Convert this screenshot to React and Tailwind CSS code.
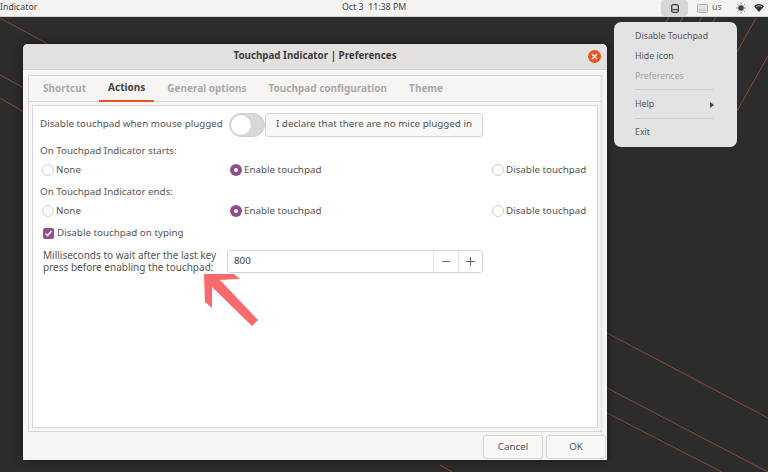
import React from 'react';

const font = { fontFamily: '"Noto Sans", sans-serif' };

const Radio = ({ checked, label }) => (
  <div className="flex items-center gap-[2px]">
    {checked ? (
      <span className="w-[12px] h-[12px] rounded-full bg-[#924d8b] flex items-center justify-center">
        <span className="w-[4px] h-[4px] rounded-full bg-white" />
      </span>
    ) : (
      <span className="w-[12px] h-[12px] rounded-full border border-[#cfcfcf] bg-white" />
    )}
    <span>{label}</span>
  </div>
);

const RadioRow = () => (
  <div className="h-[20px] pl-[9px] grid grid-cols-[188px_262px_auto] items-center">
    <Radio label="None" />
    <Radio checked label="Enable touchpad" />
    <Radio label="Disable touchpad" />
  </div>
);

const Wallpaper = () => (
  <svg className="absolute inset-0" width="768" height="472" viewBox="0 0 768 472" fill="none" stroke="#8a4a36" strokeWidth="1">
    <path d="M0 18L48 44" />
    <path d="M0 75L24 88" />
    <path d="M0 98L24 112" />
    <path d="M607 333L768 418" />
    <path d="M607 388L768 472" />
    <path d="M607 413L722 472" />
    <path d="M440 465L452 472" />
    <path d="M756 18L737 52" />
    <path d="M768 56L737 111" />
    <path d="M669 17L666 22" />
    <path d="M683 17L680 22" />
    <path d="M702 17L699 22" />
    <path d="M716 17L713 22" />
  </svg>
);

const App = () => {
  const tabs = ['Shortcut', 'Actions', 'General options', 'Touchpad configuration', 'Theme'];

  return (
    <div className="relative w-[768px] h-[472px] overflow-hidden bg-[#2d2c2c] text-[#555555]" style={font}>
      <Wallpaper />

      {/* Top bar */}
      <header className="absolute top-0 left-0 w-full h-[17px] bg-[#f4f3f2] flex items-center justify-between border-b border-[#d5d4d3] text-[8.8px] text-[#444444]">
        <span>Indicator</span>
        <span className="absolute left-[342px]">Oct 3&nbsp; 11:38 PM</span>
        <div className="flex items-center h-full">
          <div className="w-[27px] h-[16px] bg-[#d9d8d7] rounded-[3px] flex items-center justify-center">
            <svg width="8" height="9" viewBox="0 0 8 9">
              <rect x="0.7" y="0.7" width="6.6" height="7.6" rx="1.5" fill="none" stroke="#3f3f3f" strokeWidth="1.3" />
              <rect x="1" y="5" width="6" height="1.2" fill="#3f3f3f" />
            </svg>
          </div>
          <svg className="ml-[9px]" width="11" height="9" viewBox="0 0 11 9">
            <rect x="0.5" y="0.5" width="10" height="8" rx="1" fill="#e2e2e2" stroke="#b0b0b0" />
            <rect x="2" y="5.5" width="7" height="1" fill="#bcbcbc" />
          </svg>
          <span className="ml-[4px] w-[24px] text-[#666666]">us</span>
          <svg width="10" height="12" viewBox="0 0 10 12" stroke="#6a6a6a" strokeWidth="0.8">
            <circle cx="5" cy="6" r="2.8" fill="#444444" stroke="none" />
            <path d="M5 0.5V2.5M5 9.5V11.5M0 6H1.8M8.2 6H10M1.2 2.2L2.6 3.6M7.4 8.4L8.8 9.8M8.8 2.2L7.4 3.6M2.6 8.4L1.2 9.8" />
          </svg>
          <svg className="ml-[8px] mr-[4px]" width="10" height="8" viewBox="0 0 10 8">
            <path d="M0 2.2C2.8 -0.6 7.2 -0.6 10 2.2L5 8Z" fill="#333333" />
            <path d="M2 2.8C3.8 1.5 6.2 1.5 8 2.8" fill="none" stroke="#f4f3f2" strokeWidth="0.7" />
          </svg>
        </div>
      </header>

      {/* Preferences window */}
      <section className="absolute left-[23px] top-[44px] w-[584px] h-[416px] bg-[#f6f5f4] rounded-t-[5px] flex flex-col shadow-[0_0_8px_rgba(0,0,0,0.5)]">
        <div className="relative h-[26px] shrink-0 bg-[#e2e1e0] rounded-t-[5px] border-b border-[#d2d1d0] flex items-center justify-center font-bold text-[9.8px] text-[#3d3d3d]">
          Touchpad Indicator | Preferences
          <span className="absolute right-[6px] top-[6px] w-[13px] h-[13px] rounded-full bg-[#e95420] flex items-center justify-center">
            <svg width="7" height="7" viewBox="0 0 7 7" stroke="#ffffff" strokeWidth="1.4">
              <path d="M1 1L6 6M6 1L1 6" />
            </svg>
          </span>
        </div>

        <div className="mt-[5px] mx-[5px] h-[357px] border border-[#d8d7d6] flex flex-col">
          <nav className="h-[26px] shrink-0 flex pl-[3px] border-b border-[#d8d7d6] font-bold text-[10px] text-[#a9a9a9]">
            {tabs.map((tab) => (
              <div
                key={tab}
                className={
                  tab === 'Actions'
                    ? 'px-[9px] mx-[2px] pb-[1px] h-[26px] flex items-center text-[#444444] border-b-2 border-[#e95420]'
                    : 'px-[11px] pb-[2px] h-[26px] flex items-center'
                }
              >
                {tab}
              </div>
            ))}
          </nav>

          <div className="flex-1 m-[3px] bg-white border border-[#d8d7d6] flex flex-col text-[9.8px]">
            <div className="mt-[6px] h-[25px] pl-[7px] flex items-center">
              <span className="w-[189px] whitespace-nowrap">Disable touchpad when mouse plugged</span>
              <div className="w-[36px] h-[24px] rounded-full bg-[#d9d8d7] border border-[#d0cfce]">
                <div className="w-[22px] h-[22px] rounded-full bg-white border border-[#d0cfce]" />
              </div>
              <button className="w-[218px] h-[24px] bg-[#f8f8f7] border border-[#d5d4d3] rounded-[3px] text-[#555555]">
                I declare that there are no mice plugged in
              </button>
            </div>
            <div className="mt-[2px] h-[21px] pl-[7px] pt-[3px] flex items-center">On Touchpad Indicator starts:</div>
            <RadioRow />
            <div className="mt-[1px] h-[20px] pl-[7px] pt-[2px] flex items-center">On Touchpad Indicator ends:</div>
            <RadioRow />
            <div className="mt-[2px] h-[20px] pl-[10px] flex items-center gap-[3px]">
              <span className="w-[11px] h-[11px] rounded-[2px] bg-[#924d8b] flex items-center justify-center">
                <svg width="9" height="9" viewBox="0 0 9 9" fill="none" stroke="#ffffff" strokeWidth="1.4">
                  <path d="M1.5 4.5L3.7 6.7L7.5 2" />
                </svg>
              </span>
              Disable touchpad on typing
            </div>
            <div className="mt-[6px] pl-[10px] flex items-center">
              <div className="w-[184px] leading-[12px] text-[10px]">
                Milliseconds to wait after the last key press before enabling the touchpad:
              </div>
              <div className="w-[256px] h-[23px] border border-[#d5d4d3] rounded-[3px] flex items-center">
                <span className="flex-1 pl-[6px] text-[#3d3d3d]">800</span>
                <span className="w-[25px] h-full border-l border-[#e4e3e2] flex items-center justify-center">
                  <span className="w-[8px] h-px bg-[#777777]" />
                </span>
                <span className="w-[24px] h-full border-l border-[#e4e3e2] flex items-center justify-center relative">
                  <span className="w-[9px] h-px bg-[#666666]" />
                  <span className="absolute w-px h-[9px] bg-[#666666]" />
                </span>
              </div>
            </div>
          </div>
        </div>

        <div className="flex-1 flex justify-end items-start pt-[3px] pr-[1px] text-[9.8px]">
          <button className="w-[60px] h-[24px] bg-[#f8f8f7] border border-[#d5d4d3] rounded-[3px]">Cancel</button>
          <button className="ml-[3px] w-[60px] h-[24px] bg-[#f8f8f7] border border-[#d5d4d3] rounded-[3px]">OK</button>
        </div>
      </section>

      {/* Arrow annotation */}
      <svg className="absolute inset-0" width="768" height="472" viewBox="0 0 768 472">
        <polygon points="204,274 234,274 240,279 220,280 258,320 252,326 212,287 212,308 205,302" fill="#f96a6e" />
      </svg>

      {/* Indicator menu */}
      <aside className="absolute left-[614px] top-[22px] w-[123px] h-[125px] bg-[#e4e3e3] rounded-[7px] text-[8.8px] text-[#555555] pl-[21px] pr-[23px] flex flex-col">
        <div className="mt-[5px] h-[20px] flex items-center whitespace-nowrap">Disable Touchpad</div>
        <div className="h-[20px] flex items-center">Hide icon</div>
        <div className="h-[20px] flex items-center text-[#a3a3a3]">Preferences</div>
        <div className="mt-[2px] h-px bg-[#d2d1d1]" />
        <div className="mt-[5px] h-[20px] flex items-center justify-between">
          Help
          <span className="w-0 h-0 border-y-[3.5px] border-y-transparent border-l-[4px] border-l-[#444444]" />
        </div>
        <div className="mt-[3px] h-px bg-[#d2d1d1]" />
        <div className="mt-[4px] h-[20px] flex items-center">Exit</div>
      </aside>
    </div>
  );
};

export default App;
